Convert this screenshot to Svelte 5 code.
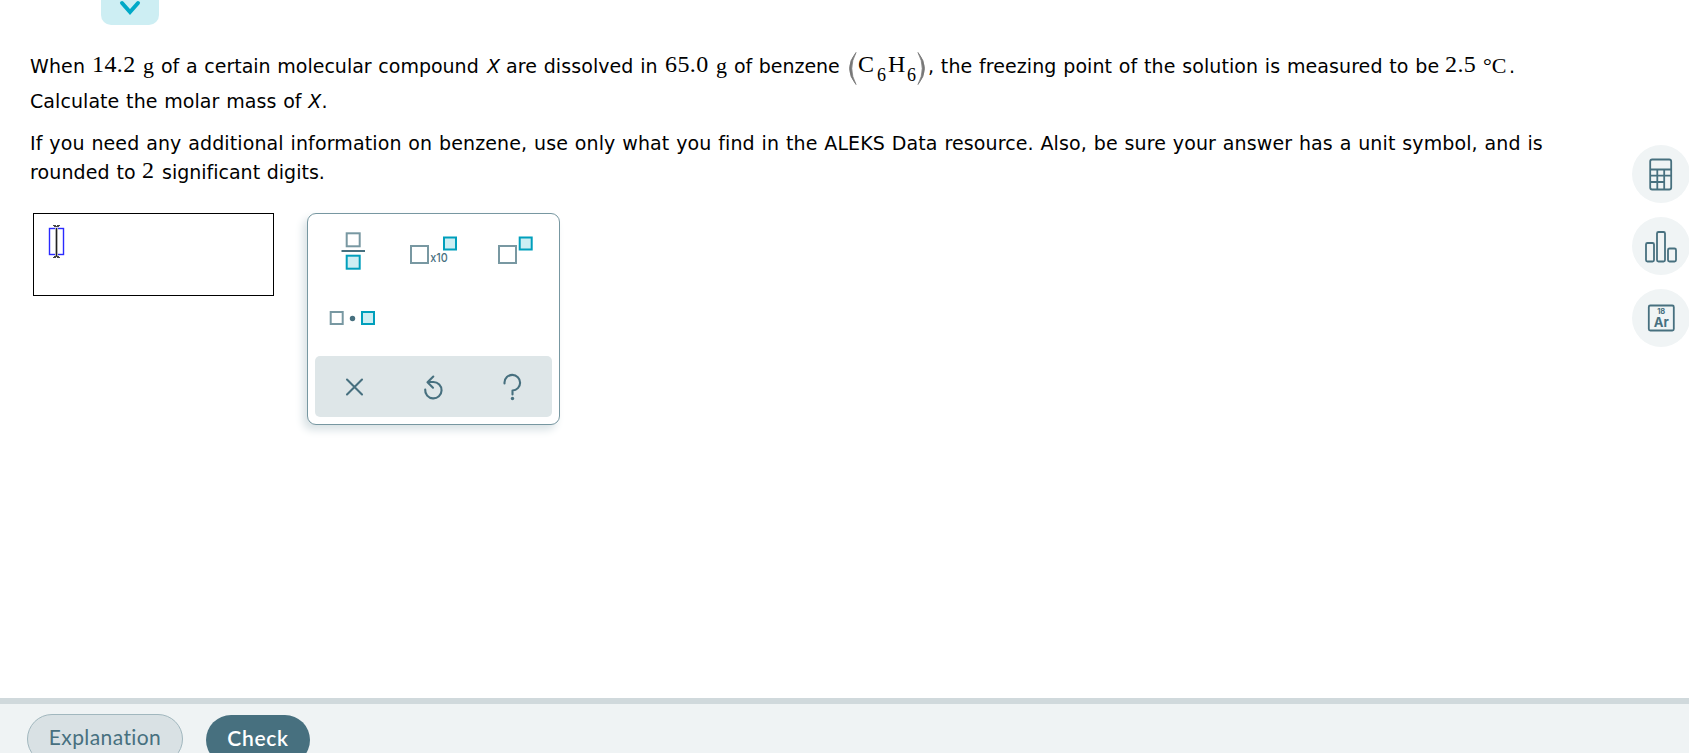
<script lang="ts">
  let answer = "";
  let keys = [
    { name: "fraction", label: "Fraction" },
    { name: "scientific", label: "Scientific notation" },
    { name: "exponent", label: "Exponent" },
    { name: "dot", label: "Multiplication dot" },
  ];

  function clear() {
    answer = "";
  }
</script>

<main>
  <div class="workspace">
    <div class="content">
      <button class="tab" aria-label="Show more">
        <svg width="54" height="25" viewBox="0 0 54 25">
          <path d="M19 3l8 9 8-9" fill="none" stroke="#00a9c7" stroke-width="4" stroke-linecap="round" />
        </svg>
      </button>

      <div class="question">
        <div class="line first">
          <span class="s1">When</span><span class="num n1">14.2</span><span class="unit u1">g</span><span class="s2">of a certain molecular compound</span><i class="x1">X</i><span class="s3">are dissolved in</span><span class="num n2">65.0</span><span class="unit u2">g</span><span class="s4">of benzene</span><span class="formula"><svg width="9" height="33" viewBox="0 0 9 33"><path d="M8 .5Q-5 16.5 8 32.5Q-.5 16.5 8 .5Z" fill="#777" stroke="#777" stroke-width=".8" /></svg><span class="atom">C</span><span class="sub">6</span><span class="atom">H</span><span class="sub">6</span><svg width="9" height="33" viewBox="0 0 9 33"><path d="M1 .5Q14 16.5 1 32.5Q9.500 16.5 1 .5Z" fill="#777" stroke="#777" stroke-width=".8" /></svg></span><span class="s5">, the freezing point of the solution is measured to be</span><span class="num n3">2.5</span><span class="unit u3">°C</span><span class="dot">.</span>
        </div>
        <div class="line second">Calculate the molar mass of <i>X</i>.</div>
        <div class="line third">If you need any additional information on benzene, use only what you find in the ALEKS Data resource. Also, be sure your answer has a unit symbol, and is</div>
        <div class="line fourth"><span class="s6">rounded to</span><span class="num n4">2</span><span class="s7">significant digits.</span></div>
      </div>

      <div class="answer-row">
        <div class="answer">
          <svg width="18" height="36" viewBox="0 0 18 36">
            <rect x="2.500" y="4.500" width="14" height="26" fill="none" stroke="#2a2aff" stroke-width="1.4" />
            <path d="M9.500 4v28" stroke="#c4c4c4" stroke-width="3" />
            <path d="M9.500 4v28" stroke="#222" stroke-width="1.2" />
            <path d="M6 1.500h3M10 1.500h3M7 2.500h5M6 33.500h3M10 33.500h3M7 32.500h5" stroke="#444" />
          </svg>
          {answer}
        </div>

        <div class="palette">
          <div class="keys">
            {#each keys as key}
              <button class="key" aria-label={key.label}>
                {#if key.name == "fraction"}
                  <svg width="78" height="62" viewBox="0 0 78 62">
                    <rect class="box" x="31.700" y="13.300" width="13" height="13" />
                    <path d="M26.500 31h23.500" stroke="#47707f" stroke-width="2" />
                    <rect class="box fill" x="31.700" y="35.700" width="13" height="13" />
                  </svg>
                {:else if key.name == "scientific"}
                  <svg width="78" height="62" viewBox="0 0 78 62">
                    <rect class="box" x="17" y="26" width="17" height="17" />
                    <text x="36.300" y="41.500" textLength="17.500" lengthAdjust="spacingAndGlyphs">x10</text>
                    <rect class="box fill" x="50" y="17.500" width="12" height="12" />
                  </svg>
                {:else if key.name == "exponent"}
                  <svg width="78" height="62" viewBox="0 0 78 62">
                    <rect class="box" x="26" y="26" width="17" height="17" />
                    <rect class="box fill" x="46.700" y="17.500" width="12" height="12" />
                  </svg>
                {:else}
                  <svg width="78" height="62" viewBox="0 0 78 62">
                    <rect class="box" x="15.700" y="29" width="12" height="12" />
                    <circle cx="37.500" cy="35.500" r="2.700" fill="#47707f" />
                    <rect class="box fill" x="47" y="29" width="12" height="12" />
                  </svg>
                {/if}
              </button>
            {/each}
          </div>
          <div class="actions">
            <button aria-label="Clear" on:click={clear}>
              <svg width="30" height="30" viewBox="0 0 30 30"><path d="M7 7.500l15 15M22 7.500l-15 15" /></svg>
            </button>
            <button aria-label="Undo">
              <svg width="30" height="30" viewBox="0 0 30 30"><path d="M6.200 17.500a8.200 8.200 0 1 0 8.200-7.500H9M14.300 4.500L8.500 10.200l5.500 5.500" /></svg>
            </button>
            <button aria-label="Help">
              <svg width="30" height="30" viewBox="0 0 30 30"><path d="M6.500 11.500V10.500a7.800 7.800 0 1 1 8 8v4" /><circle cx="14.500" cy="26.500" r="1.700" /></svg>
            </button>
          </div>
        </div>
      </div>
    </div>

    <div class="tools">
      <button aria-label="Calculator">
        <svg width="58" height="58" viewBox="0 0 58 58">
          <rect x="18.200" y="14.500" width="21" height="30" rx="2" />
          <path d="M18.200 24.500h21M18.200 30.700h21M18.200 37h14M25.300 24.500v20M32.200 24.500v20" />
        </svg>
      </button>
      <button aria-label="Data">
        <svg width="58" height="58" viewBox="0 0 58 58">
          <rect x="14" y="26" width="8" height="18.500" rx="1.500" />
          <rect x="25" y="15" width="8" height="29.500" rx="1.500" />
          <rect x="36" y="31.500" width="8" height="13" rx="1.500" />
        </svg>
      </button>
      <button aria-label="Periodic table">
        <svg width="58" height="58" viewBox="0 0 58 58">
          <rect x="16.800" y="16.500" width="25" height="25" rx="1.500" />
          <text x="29.200" y="25" font-size="7.500">18</text>
          <text x="29.200" y="37.500" font-size="13.500" textLength="15" lengthAdjust="spacingAndGlyphs">Ar</text>
        </svg>
      </button>
    </div>
  </div>

  <div class="footer">
    <button class="explanation">Explanation</button>
    <button class="check">Check</button>
  </div>
</main>

<style>
  :global(body) {
    margin: 0;
    overflow: hidden;
    background: #fff;
  }

  main {
    display: flex;
    flex-direction: column;
    height: 753px;
    overflow: hidden;
    font-family: "DejaVu Sans", Verdana, sans-serif;
    font-size: 19px;
    color: #000;
  }

  button {
    border: 0;
    padding: 0;
    background: none;
    cursor: pointer;
  }

  svg {
    display: block;
  }

  .workspace {
    display: flex;
    justify-content: space-between;
    height: 698px;
  }

  .content {
    width: 1600px;
  }

  .tab {
    display: block;
    margin-left: 101px;
    width: 58px;
    height: 25px;
    background: #cdeef3;
    border-radius: 0 0 10px 10px;
  }

  .tab svg {
    margin: 0 auto;
  }

  .question {
    margin: 27px 0 0 30px;
  }

  .line {
    height: 29px;
    line-height: 29px;
    white-space: nowrap;
    letter-spacing: 0.12px;
    word-spacing: 0.63px;
    font-variant-ligatures: none;
  }

  .line.first {
    height: 35px;
  }

  .line.second {
    height: 42px;
    letter-spacing: 0.07px;
  }

  .line span,
  .line.first i {
    display: inline-block;
    line-height: 0;
  }

  .num,
  .unit,
  .formula {
    font-family: "Liberation Serif", serif;
    font-size: 24px;
    letter-spacing: 0;
  }

  .unit {
    font-size: 22px;
  }

  .num {
    position: relative;
    top: -1px;
    letter-spacing: 0.4px;
  }

  .s1 { width: 62px; }
  .n1 { width: 51px; }
  .u1 { width: 18px; }
  .s2 { width: 326px; letter-spacing: 0; }
  .x1 { width: 19px; }
  .s3 { width: 159px; letter-spacing: 0.08px; }
  .n2 { width: 51px; }
  .u2 { width: 18px; }
  .s4 { width: 114px; letter-spacing: -0.05px; }
  .s5 { width: 518px; letter-spacing: 0.08px; text-indent: 1px; }
  .n3 { width: 38px; }
  .u3 { width: 26px; }
  .s6 { width: 112px; }
  .n4 { width: 20px; }
  .s7 { letter-spacing: 0; }

  .line .formula {
    display: inline-flex;
    width: 79px;
    height: 0;
    align-items: center;
  }

  .formula svg {
    flex: none;
    position: relative;
    top: 12px;
  }

  .line .atom {
    width: 18px;
    position: relative;
    top: 7px;
    left: 1px;
  }

  .line .sub {
    width: 12px;
    font-size: 18px;
    position: relative;
    top: 18px;
    left: 2px;
  }

  .answer-row {
    display: flex;
    align-items: flex-start;
    gap: 33px;
    margin: 26px 0 0 33px;
  }

  .answer {
    box-sizing: border-box;
    width: 241px;
    height: 83px;
    padding: 10px 13px;
    border: 1px solid #000;
  }

  .palette {
    box-sizing: border-box;
    width: 253px;
    height: 212px;
    padding: 6px 7px;
    border: 1px solid #7797a1;
    border-radius: 9px;
    background: #fff;
    box-shadow: -4px 5px 8px #d9e2e5;
  }

  .keys {
    display: grid;
    grid-template-columns: repeat(3, 79px);
    grid-template-rows: 63px 73px;
  }

  .key {
    display: flex;
    align-items: flex-start;
  }

  .box {
    fill: #fff;
    stroke: #7898a2;
    stroke-width: 2;
  }

  .box.fill {
    fill: #cdeef3;
    stroke: #009fbc;
  }

  .key text {
    font: 500 12px Inter, sans-serif;
    fill: #47707f;
  }

  .actions {
    display: flex;
    height: 61px;
    border-radius: 5px;
    background: #dee6e8;
  }

  .actions button {
    flex: 1;
    display: flex;
    align-items: center;
    justify-content: center;
  }

  .actions svg {
    fill: none;
    stroke: #47707f;
    stroke-width: 2.1;
    stroke-linecap: round;
    stroke-linejoin: round;
  }

  .actions circle {
    fill: #47707f;
    stroke: none;
  }

  .tools {
    display: flex;
    flex-direction: column;
    gap: 14px;
    margin-top: 145px;
    width: 57px;
  }

  .tools button {
    width: 58px;
    height: 58px;
    border-radius: 50%;
    background: #f0f4f5;
  }

  .tools svg {
    fill: none;
    stroke: #47707f;
    stroke-width: 1.8;
  }

  .tools text {
    fill: #47707f;
    stroke: none;
    text-anchor: middle;
    font-family: Inter, sans-serif;
    font-weight: 700;
  }

  .footer {
    box-sizing: border-box;
    display: flex;
    align-items: flex-start;
    gap: 23px;
    height: 55px;
    padding: 10px 27px 0;
    border-top: 6px solid #d0d9dc;
    background: #eff3f4;
  }

  .footer button {
    box-sizing: border-box;
    flex: none;
    height: 50px;
    padding-bottom: 4px;
    border-radius: 25px;
    font: 21px/42px Lato, sans-serif;
    letter-spacing: 0.4px;
  }

  .footer .explanation {
    width: 156px;
    border: 1px solid #a1b7be;
    background: #d9e1e4;
    color: #47707f;
  }

  .footer .check {
    width: 104px;
    margin-top: 1px;
    background: #47707f;
    color: #fff;
    font-weight: 600;
    letter-spacing: 0.7px;
  }
</style>
